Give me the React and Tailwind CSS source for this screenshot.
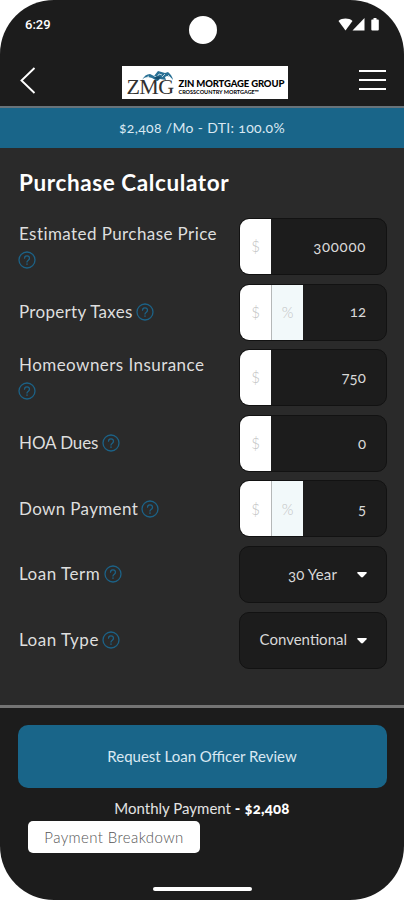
import React from "react";

function Help({ className = "" }) {
  return (
    <svg className={"-ml-px inline-block align-[-3px] " + className} width="18" height="18" viewBox="0 0 18 18" fill="none" stroke="#1c6287" strokeWidth="1.3" strokeLinecap="round">
      <circle cx="9" cy="9" r="8" />
      <path d="M6.5 7.2a2.5 2.4 0 1 1 3.9 2c-.9.6-1.4.9-1.4 1.9" />
      <path d="M9 13.1v.2" strokeWidth="1.5" />
    </svg>
  );
}

function Unit({ children, className = "" }) {
  return <span className={"flex h-full items-center justify-center text-[15px] font-light text-[#c2c4c4] " + className}>{children}</span>;
}

function Row({ label, labelClass = "", percent, value, valueClass = "", select }) {
  return (
    <div className="flex h-[57px] items-center justify-between">
      <div className="w-[202px] text-[17px] leading-[26px] text-[#dedede]">
        <span className={labelClass}>{label}</span> <Help />
      </div>
      <div className="flex h-[57px] w-[148px] items-center overflow-hidden rounded-[10px] border border-[#121212] bg-[#1c1c1c]">
        {!select && <Unit className="w-[31px] shrink-0 bg-white">$</Unit>}
        {percent && <Unit className="w-[32px] shrink-0 border-l border-[#b5b8b8] bg-[#f2f9fa]">%</Unit>}
        <span className={"flex-1 pb-px text-right text-[15px] text-[#d8d8d8] oldstyle-nums " + (select ? "" : "pr-[20px] ") + valueClass}>{value}</span>
        {select && (
          <svg className="mt-px mr-[19px] shrink-0" width="10" height="6" viewBox="0 0 10 6" fill="#fff">
            <path d="M1 0h8q1.4.2.5 1.200L6 5q-1 .9-2 0L.5 1.200Q-.4.2 1 0Z" />
          </svg>
        )}
      </div>
    </div>
  );
}

function Logo() {
  return (
    <div className="flex h-[33px] w-[166px] items-end bg-white pb-[2px] pl-[5px] text-black">
      <div className="relative w-[49px] shrink-0">
        <svg className="absolute -top-[8px] left-[14px]" width="33" height="14" viewBox="0 0 33 14">
          <path d="M1 11 Q4 5 9 5l4 2 4-5 7 2 3-1q4 3 5 8-3-4-6-4l-2 1 1 3-6-1-3 2-5-3-4-1q-4 0-6 3Z" fill="#2a7195" />
          <path d="m13 7 3 1 2-3 3 1M24 5l-3 3M5 9l3-2M27 6l3 3" fill="none" stroke="#c9dfe8" strokeWidth=".9" />
          <path d="m16 7 4 1-3 3-4-2Z" fill="#164f70" />
        </svg>
        <div className="font-['Liberation_Serif',serif] text-[22px] leading-[20px] tracking-[-0.6px] text-[#303030]">ZMG</div>
      </div>
      <div className="ml-[3px] pb-[1px] whitespace-nowrap">
        <div className="text-[9.5px] leading-[11px] font-black tracking-[-0.13px]">ZIN MORTGAGE GROUP</div>
        <div className="text-[5.5px] leading-[7px] font-bold tracking-[0px]">CROSSCOUNTRY MORTGAGE™</div>
      </div>
    </div>
  );
}

export default function App() {
  return (
    <div className="h-[900px] w-[404px] bg-white font-['Lato',sans-serif]">
      <div className="flex h-full flex-col overflow-hidden rounded-[54px] bg-[#1c1c1c]">
        <div className="flex h-[60px] shrink-0 justify-between pr-[24px] pl-[25px]">
          <span className="w-[60px] pt-[16px] font-['Roboto',sans-serif] text-[13px] leading-[17px] font-medium text-white">6:29</span>
          <span className="mt-[16px] size-[28px] rounded-full bg-white" />
          <span className="flex w-[60px] justify-end pt-[18px]">
            <svg width="42" height="14" viewBox="0 0 42 14" fill="#fff">
              <path d="M.5 3C4-.2 11-.2 14.500 3L7.500 12.500Z" />
              <path d="M26.500 0v12.500H14.500Z" />
              <path d="M34 1.500h1.500V0h3v1.500H40q.8.2.8 1v9q0 1-1 1h-5.500q-1 0-1-1v-9q0-.8.7-1Z" />
            </svg>
          </span>
        </div>
        <div className="flex h-[46px] shrink-0 items-start justify-between pr-[18px] pl-[19px]">
          <svg className="mt-[7px] w-[28px]" width="28" height="28" viewBox="0 0 28 28" fill="none" stroke="#fff" strokeWidth="1.900">
            <path d="M15.500 1 2.500 13.500l13 12.500" />
          </svg>
          <div className="mt-[6px] ml-[4px]"><Logo /></div>
          <div className="mt-[10px] flex w-[28px] flex-col items-end gap-[7px]">
            <span className="h-[2px] w-[27px] bg-white" />
            <span className="h-[2px] w-[27px] bg-white" />
            <span className="h-[2px] w-[27px] bg-white" />
          </div>
        </div>
        <div className="h-[2px] shrink-0 bg-[#68737a]" />
        <div className="flex h-[40px] shrink-0 items-center justify-center bg-[#196589] pb-[2px] text-[14px] text-[#d9e8f2]">
          <span className="tracking-[0.33px] oldstyle-nums">$2,408 /Mo - DTI: 100.0%</span>
        </div>
        <div className="h-[557px] shrink-0 bg-[#2a2a2a] pt-[21px] pr-[17px] pl-[19px]">
          <h1 className="h-[49px] text-[22.5px] leading-[28px] font-bold tracking-[0.6px] text-white">Purchase Calculator</h1>
          <div className="flex flex-col gap-[8.6px]">
            <Row label="Estimated Purchase Price" labelClass="tracking-[0.42px]" value="300000" valueClass="tracking-[0.7px]" />
            <Row label="Property Taxes" labelClass="tracking-[0.3px]" percent value="12" />
            <Row label="Homeowners Insurance" labelClass="tracking-[0.45px]" value="750" valueClass="tracking-[0.1px]" />
            <Row label="HOA Dues" labelClass="tracking-[-0.1px]" value="0" />
            <Row label="Down Payment" labelClass="tracking-[0.35px]" percent value="5" />
            <Row label="Loan Term" labelClass="tracking-[0.5px]" select value="30 Year" valueClass="pr-[20px] tracking-[0.15px]" />
            <Row label="Loan Type" labelClass="tracking-[0.5px]" select value="Conventional" valueClass="pr-[10px]" />
          </div>
        </div>
        <div className="h-[3px] shrink-0 bg-[#747474]" />
        <div className="flex flex-1 flex-col items-center pt-[17px]">
          <div className="flex h-[63px] w-[369px] items-center justify-center rounded-[10px] bg-[#196589] text-[15px] text-[#d9e8f2]">
            <span>Request Loan Officer Review</span>
          </div>
          <div className="mt-[9px] text-[15px] leading-[22px] text-[#e3e3e3]">
            <span>Monthly Payment </span><b className="font-black tracking-[0.2px] text-white oldstyle-nums">- $2,408</b>
          </div>
          <div className="mt-[2px] ml-[28px] flex h-[32px] w-[172px] items-center justify-center self-start rounded-[5px] bg-white text-[15px] font-light text-[#555]">
            <span className="tracking-[0.4px]">Payment Breakdown</span>
          </div>
          <div className="mt-[34px] ml-px h-[4px] w-[99px] rounded-full bg-white" />
        </div>
      </div>
    </div>
  );
}
